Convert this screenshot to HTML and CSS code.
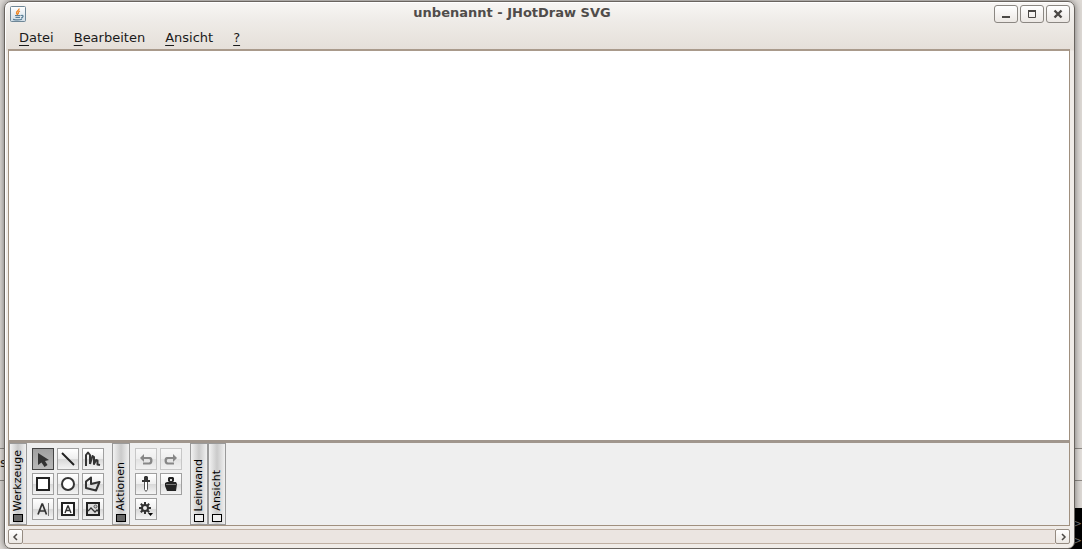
FILE: index.html
```html
<!DOCTYPE html>
<html lang="de">
<head>
<meta charset="utf-8">
<title>unbenannt - JHotDraw SVG</title>
<link rel="stylesheet" href="styles.css">
</head>
<body>
<div class="behind behind-left"><span>s</span></div>
<div class="behind behind-right"></div>
<div class="terminal"><span>&gt;</span><span>&gt;</span></div>
<div class="window">
  <header class="titlebar">
    <svg class="app-icon" width="16" height="16" viewBox="0 0 16 16"><defs><linearGradient id="g" x2="0" y2="1"><stop offset="0" stop-color="#fff"/><stop offset="1" stop-color="#cfdce6"/></linearGradient></defs><rect x=".5" y=".5" width="15" height="15" rx="1" fill="url(#g)" stroke="#6f8797"/><path d="M9 2.500C9.500 4.500 6 5 6.500 7q.3 1 1.500 2M10 5Q7.500 6 8.500 8" fill="none" stroke="#ee8422" stroke-width="1.300"/><path d="M5 9.500h5.500M5.500 11.300h4.500M3 13.300q5 1.200 9 0M11 9.500q2.500-.5 2 1t-2 1.500" fill="none" stroke="#5b8098" stroke-width="1.200"/></svg>
    <h1 class="title">unbenannt - JHotDraw SVG</h1>
    <div class="window-buttons">
      <button aria-label="Minimieren"><svg width="12" height="12"><path d="M2 9h8" stroke="#4b4845" stroke-width="2"/></svg></button>
      <button aria-label="Maximieren"><svg width="12" height="12"><path d="M2 2h8v2H2z" fill="#4b4845"/><path d="M2.500 2.500h7v7h-7z" fill="none" stroke="#4b4845"/></svg></button>
      <button aria-label="Schließen"><svg width="12" height="12"><path d="M2.500 2.500l7 7M9.500 2.500l-7 7" stroke="#4b4845" stroke-width="2.400"/></svg></button>
    </div>
  </header>
  <nav class="menubar">
    <button><u>D</u>atei</button><button><u>B</u>earbeiten</button><button><u>A</u>nsicht</button><button><u>?</u></button>
  </nav>
  <main class="canvas"></main>
  <section class="toolbars">
    <button class="handle open"><i></i><span>Werkzeuge</span></button>
    <div class="tools three">
      <button class="tool selected" aria-label="Auswahl"><svg viewBox="0 0 20 20"><path d="M5 4v12l3.500-2.500 3 4.500 3-2-2.500-4 4-1z" fill="#333"/></svg></button>
      <button class="tool" aria-label="Linie"><svg viewBox="0 0 20 20"><path d="M4 4l12 12" stroke="#222" stroke-width="2"/></svg></button>
      <button class="tool" aria-label="Freihand"><svg viewBox="0 0 20 20"><path d="M3 17V6L5 3.500 7 6v9M7 15L9.500 7l1.500 1v7l2-4 1.500.5v4L17 16" fill="none" stroke="#333" stroke-width="2" stroke-linejoin="round"/></svg></button>
      <button class="tool" aria-label="Rechteck"><svg viewBox="0 0 20 20"><path d="M4 4h12v12H4z" fill="#fff" stroke="#222" stroke-width="2"/></svg></button>
      <button class="tool" aria-label="Ellipse"><svg viewBox="0 0 20 20"><circle cx="10" cy="10" r="6" fill="#fff" stroke="#333" stroke-width="2"/></svg></button>
      <button class="tool" aria-label="Polygon"><svg viewBox="0 0 20 20"><path d="M8 3.500L3 7.500V14l10 2.500 3.500-8.500L8 10z" fill="none" stroke="#333" stroke-width="2" stroke-linejoin="round"/></svg></button>
      <button class="tool" aria-label="Text"><svg viewBox="0 0 20 20"><path d="M5 15.500L9 5h.5l4 10.500M6.500 12h6" fill="none" stroke="#333" stroke-width="1.700"/><path d="M15.500 4v13" stroke="#777"/></svg></button>
      <button class="tool" aria-label="Textbereich"><svg viewBox="0 0 20 20"><path d="M4 4h12v12H4z" fill="#fff" stroke="#222" stroke-width="2"/><path d="M7 14l2.800-7h.4l2.800 7M8 11.500h4" fill="none" stroke="#333" stroke-width="1.400"/></svg></button>
      <button class="tool" aria-label="Bild"><svg viewBox="0 0 20 20"><path d="M4 4h12v12H4z" fill="#ddd" stroke="#222" stroke-width="2"/><path d="M5 12l3-3 4 4 2-2 2 2" fill="none" stroke="#333" stroke-width="1.300"/><circle cx="12.500" cy="7.500" r="1.500" fill="#ccc" stroke="#555"/></svg></button>
    </div>
    <button class="handle open"><i></i><span>Aktionen</span></button>
    <div class="tools two">
      <button class="tool" disabled aria-label="Rückgängig"><svg viewBox="0 0 20 20"><path d="M8 5L4 9l4 4v-3h5q1.200 0 1.200 1.700T13 13.500H7v2h7q2.500-.5 2.500-4T14 8H8z" fill="#222"/></svg></button>
      <button class="tool" disabled aria-label="Wiederholen"><svg viewBox="0 0 20 20"><path d="M12 5l4 4-4 4v-3H7q-1.200 0-1.200 1.700T7 13.500h6v2H6q-2.500-.5-2.500-4T6 8h6z" fill="#222"/></svg></button>
      <button class="tool" aria-label="Attribute aufnehmen"><svg viewBox="0 0 20 20"><path d="M9 2h2l1 1v3h2v2H6V6h2V3z" fill="#333"/><path d="M8.500 8v7.500l1.500 2 1.500-2V8" fill="#fff" stroke="#555"/></svg></button>
      <button class="tool" aria-label="Attribute anwenden"><svg viewBox="0 0 20 20"><path d="M8 3h4l1 1v3l-1 1h3l1 2-1 7H6l-2-5V9l2-1h2L7 7V4z" fill="#222"/><path d="M9 5h2v2H9z" fill="#ddd"/><path d="M5 10.500h10" stroke="#777"/></svg></button>
      <button class="tool" aria-label="Aktionen"><svg viewBox="0 0 20 20"><g stroke="#333" stroke-width="2"><path d="M9 3v12M3 9h12M4.800 4.800l8.400 8.400M13.200 4.800l-8.400 8.400"/><circle cx="9" cy="9" r="3" fill="#eee"/></g><path d="M12 14h5l-2.500 3z"/></svg></button>
    </div>
    <button class="handle"><i></i><span>Leinwand</span></button>
    <button class="handle"><i></i><span>Ansicht</span></button>
  </section>
  <div class="scrollbar">
    <button aria-label="Links"><svg width="8" height="8"><path d="M5 1L2 4l3 3" fill="none" stroke="#4b4845" stroke-width="1.500"/></svg></button>
    <div class="track"></div>
    <button aria-label="Rechts"><svg width="8" height="8"><path d="M3 1l3 3-3 3" fill="none" stroke="#4b4845" stroke-width="1.500"/></svg></button>
  </div>
</div>
</body>
</html>
```
FILE: styles.css
```css
* { box-sizing: border-box; }
body {
  margin: 0;
  height: 100vh;
  display: flex;
  overflow: hidden;
  background: #dedad6;
  font-family: "DejaVu Sans", sans-serif;
  font-size: 13px;
  color: #1a1a1a;
}
button { font: inherit; color: inherit; margin: 0; padding: 0; }
svg { display: block; }
.behind { position: absolute; bottom: 68px; height: 33px; border: 1px solid #8f8b87; border-width: 1px 0; background: #e5e1dd; }
.behind-left { left: 0; width: 10px; }
.behind-left span { position: absolute; left: 0; top: 6px; }
.behind-right { right: 0; width: 8px; }
.terminal {
  position: absolute;
  right: 0;
  bottom: 0;
  width: 190px;
  height: 41px;
  background: #000;
  color: #777;
  display: flex;
  flex-direction: column;
  align-items: flex-end;
  padding-top: 7px;
  line-height: 17px;
  font-size: 10px;
}
.window {
  position: relative;
  flex: 1;
  display: flex;
  flex-direction: column;
  margin: 1px 7px 0 4px;
  padding: 0 4px 4px;
  border: 1px solid #69645f;
  border-radius: 7px;
  background: linear-gradient(#f8f6f4, #eeebe7 20px, #e5dfd9 48px, #f0ece8 49px);
  box-shadow: 0 0 7px rgba(0, 0, 0, .5), inset 1px 1px #fff;
}
.titlebar { display: flex; align-items: center; height: 23px; padding-left: 1px; }
.title { flex: 1; margin: 0; padding-left: 4px; text-align: center; font-size: 13px; line-height: 22px; color: #4f4c4a; align-self: flex-start; }
.window-buttons { display: flex; gap: 2px; }
.window-buttons button {
  width: 24px;
  height: 18px;
  display: grid;
  place-items: center;
  border: 1px solid #8b8782;
  border-radius: 3px;
  background: linear-gradient(#fff, #ece8e4);
}
.menubar { display: flex; gap: 20px; height: 24px; padding-left: 10px; }
.menubar button { border: 0; background: none; line-height: 26px; }
.menubar u { text-underline-offset: 3px; text-decoration-thickness: 1px; }
.canvas { flex: 1; background: #fff; border: 1px solid #a0907f; border-top: 2px solid #a99a8b; border-bottom: 0; margin-left: -1px; }
.toolbars {
  display: flex;
  height: 86px;
  margin-left: -1px;
  border: 1px solid #a0907f;
  border-top: 3px solid #a0968d;
  background: #efefef;
}
.handle {
  width: 18px;
  display: flex;
  flex-direction: column-reverse;
  align-items: center;
  gap: 3px;
  padding-bottom: 2px;
  border: 1px solid #9a9a9a;
  background: linear-gradient(90deg, #f2f2f2, #cacaca 50%, #f0f0f0);
  font-size: 11px;
}
.handle span { writing-mode: vertical-rl; transform: rotate(180deg); line-height: 16px; color: #000; }
.handle i { width: 10px; height: 8px; border: 1px solid #000; background: #eee; }
.handle.open i { background: #666; }
.tools { display: grid; gap: 3px; align-content: start; padding: 5px 8px 0 5px; }
.three { grid-template-columns: repeat(3, 22px); }
.two { grid-template-columns: repeat(2, 22px); }
.tool { height: 22px; border: 1px solid #a0a0a0; background: linear-gradient(#fff, #eee 50%, #d8d8d8 51%, #f4f4f4); }
.tool svg { width: 20px; height: 20px; }
.tool:disabled { opacity: .5; }
.tool.selected { border-color: #444; background: linear-gradient(#a0a0a0, #b8b8b8); }
.scrollbar { display: flex; height: 15px; margin-top: 3px; margin-left: -1px; }
.scrollbar button { width: 15px; display: grid; place-items: center; border: 1px solid #958b81; border-radius: 2px; background: linear-gradient(#fff, #ece8e4); }
.track { flex: 1; border: 1px solid #bfb0a3; border-width: 1px 0; background: #ebe5e1; }
```
